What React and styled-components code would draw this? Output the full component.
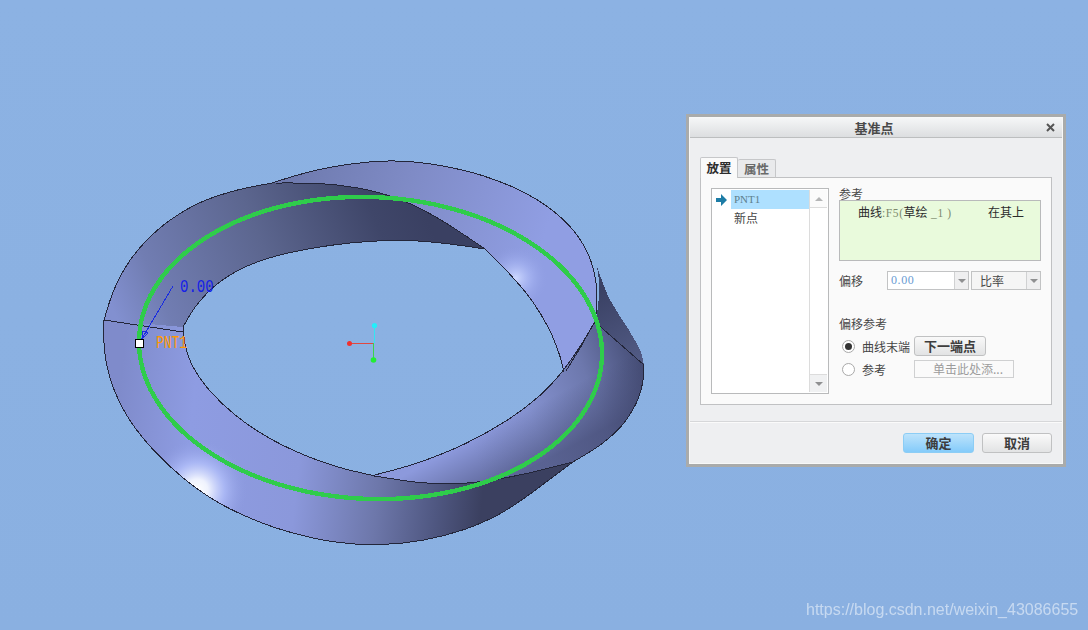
import React from "react";
import styled, { createGlobalStyle } from "styled-components";

const Global = createGlobalStyle`
  html, body { margin: 0; padding: 0; background: #8bb1e2; }
  body { font-family: "Noto Sans CJK SC", "Liberation Sans", sans-serif; }
`;

const Canvas = styled.div`
  position: relative;
  width: 1088px;
  height: 630px;
  overflow: hidden;
  background: linear-gradient(180deg, #8cb2e3 0%, #8ab0e1 100%);
`;
const ModelSvg = styled.svg`
  display: block;
`;
const Watermark = styled.div`
  position: absolute;
  left: 806px;
  top: 600px;
  font: 16px/20px "Liberation Sans", sans-serif;
  color: rgba(236, 242, 250, 0.62);
  filter: blur(0.3px);
  white-space: nowrap;
`;

/* dialog window */
const Dialog = styled.div`
  position: absolute;
  left: 686px;
  top: 114px;
  width: 380px;
  height: 353px;
  box-sizing: border-box;
  border: 3px solid #a9abab;
  box-shadow: inset 0 0 0 1px #f7f8f8;
  padding: 1px;
  background: #eeeff1;
  display: flex;
  flex-direction: column;
  color: #3e3e3e;
  font-size: 12px;
`;
const TitleBar = styled.div`
  position: relative;
  height: 19px;
  flex: none;
  display: flex;
  align-items: center;
  justify-content: center;
  background: linear-gradient(180deg, #f5f6f7, #dcdee0);
  border-bottom: 1px solid #bcbebf;
  font-weight: 700;
  font-size: 13px;
  color: #4a4a4a;
  line-height: 19px;
  padding-right: 4px;
`;
const CloseIcon = styled.svg`
  position: absolute;
  right: 7px;
  top: 5px;
`;
const Main = styled.div`
  flex: 1;
  padding: 19px 10px 16px 10px;
  border-bottom: 1px solid #d6d7d9;
  box-shadow: 0 1px 0 #fafafa;
`;
const Tabs = styled.div`
  display: flex;
  align-items: flex-end;
  height: 21px;
  margin-bottom: -1px;
  position: relative;
`;
const Tab = styled.div`
  box-sizing: border-box;
  height: ${(p) => (p.$active ? 21 : 19)}px;
  width: 38px;
  border: 1px solid #c6c7c9;
  border-bottom: ${(p) => (p.$active ? "none" : "1px solid #c0c0c0")};
  border-left: ${(p) => (p.$active ? "1px solid #c6c7c9" : "none")};
  border-radius: 2px 2px 0 0;
  background: ${(p) => (p.$active ? "#fafafa" : "#e9eaec")};
  color: ${(p) => (p.$active ? "#2d2d2d" : "#6a6a6a")};
  font-weight: 700;
  font-size: 12.5px;
  line-height: ${(p) => (p.$active ? 20 : 18)}px;
  text-align: center;
  z-index: ${(p) => (p.$active ? 1 : 0)};
`;
const Panel = styled.div`
  box-sizing: border-box;
  height: 228px;
  width: 352px;
  border: 1px solid #c0c1c3;
  background: #fafafa;
  padding: 10px 10px 0;
  display: flex;
  gap: 10px;
`;
const ListBox = styled.div`
  box-sizing: border-box;
  width: 118px;
  height: 206px;
  border: 1px solid #b9babb;
  background: #fff;
  padding: 1px;
  display: flex;
`;
const ListItems = styled.div`
  flex: 1;
  display: flex;
  flex-direction: column;
`;
const ListRow = styled.div`
  height: 19px;
  display: flex;
  align-items: center;
`;
const ArrowCell = styled.div`
  width: 18px;
  height: 19px;
  padding-left: 3px;
  box-sizing: border-box;
  display: flex;
  align-items: center;
`;
const RowLabel = styled.div`
  flex: 1;
  height: 19px;
  padding-left: 3px;
  line-height: ${(p) => (p.$selected ? 19 : 18)}px;
  background: ${(p) => (p.$selected ? "#aee0ff" : "transparent")};
  color: ${(p) => (p.$selected ? "#5d7f8c" : "#454545")};
  font-family: ${(p) => (p.$selected ? '"Liberation Serif", serif' : "inherit")};
  font-size: ${(p) => (p.$selected ? "11px" : "12px")};
`;
const ScrollBar = styled.div`
  width: 18px;
  border-left: 1px solid #dcdcdc;
  display: flex;
  flex-direction: column;
  justify-content: space-between;
  box-sizing: border-box;
`;
const ScrollButton = styled.div`
  height: 17px;
  background: ${(p) => (p.$down ? "#f0f1f2" : "#fbfbfb")};
  border: solid #dcdcdc;
  border-width: ${(p) => (p.$down ? "1px 0 0" : "0 0 1px")};
  display: flex;
  align-items: center;
  justify-content: center;
`;
const Tri = styled.span`
  width: 0;
  height: 0;
  border-left: 4px solid transparent;
  border-right: 4px solid transparent;
  ${(p) => (p.$up ? "border-bottom: 4px solid #b4b5b6;" : "border-top: 4px solid #8f9091;")}
`;
const Form = styled.div`
  flex: 1;
  display: flex;
  flex-direction: column;
  align-items: flex-start;
`;
const FieldLabel = styled.div`
  height: ${(p) => p.$h || 12}px;
  line-height: ${(p) => p.$h || 12}px;
  margin-top: ${(p) => p.$mt || 0}px;
  color: #484848;
`;
const RefBox = styled.div`
  box-sizing: border-box;
  width: 202px;
  height: 61px;
  border: 1px solid #b9babb;
  background: #e9fadc;
  padding: 2px 0 0 18px;
  display: flex;
  line-height: 17px;
  color: #2c2c2c;
`;
const RefName = styled.div`
  width: 130px;
  white-space: nowrap;
`;
const Latin = styled.span`
  font-family: "Liberation Serif", serif;
  font-size: 11.5px;
  letter-spacing: 0.6px;
  color: #7d8a6e;
`;
const OffsetRow = styled.div`
  display: flex;
  align-items: center;
  height: 19px;
  margin-top: 10px;
`;
const OffsetLabel = styled.div`
  width: 48px;
  color: #484848;
`;
const Combo = styled.div`
  box-sizing: border-box;
  display: flex;
  width: ${(p) => p.$w}px;
  height: 19px;
  margin-right: ${(p) => p.$mr || 0}px;
  border: 1px solid #c2c3c4;
  background: ${(p) => (p.$value ? "#fff" : "#f5f5f5")};
`;
const ComboText = styled.div`
  flex: 1;
  padding-left: ${(p) => (p.$value ? 3 : 8)}px;
  line-height: 17px;
  color: ${(p) => (p.$value ? "#6a9bd3" : "#474747")};
  font-family: ${(p) => (p.$value ? '"Liberation Serif", serif' : "inherit")};
  letter-spacing: ${(p) => (p.$value ? "0.6px" : "0")};
  border-right: 1px solid #d0d1d2;
`;
const ComboArrow = styled.div`
  width: 13px;
  display: flex;
  align-items: center;
  justify-content: center;
  background: #efeff0;
`;
const RadioRow = styled.div`
  display: flex;
  align-items: center;
  height: ${(p) => p.$h}px;
  margin-top: ${(p) => p.$mt}px;
  padding-left: 3px;
`;
const Radio = styled.span`
  box-sizing: border-box;
  width: 13px;
  height: 13px;
  border-radius: 50%;
  border: 1px solid #a9a9a9;
  background: #fff;
  margin-right: 7px;
  display: flex;
  align-items: center;
  justify-content: center;
  &::after {
    content: "";
    width: 7px;
    height: 7px;
    border-radius: 50%;
    background: ${(p) => (p.$on ? "#333" : "transparent")};
  }
`;
const RadioLabel = styled.div`
  width: 52px;
  color: #444;
  white-space: nowrap;
`;
const NextButton = styled.div`
  box-sizing: border-box;
  width: 72px;
  height: 20px;
  border: 1px solid #c0c1c2;
  border-radius: 3px;
  background: linear-gradient(180deg, #f9f9f9, #e2e3e4);
  text-align: center;
  line-height: 18px;
  font-size: 13px;
  font-weight: 700;
  color: #3d3d3d;
`;
const PickField = styled.div`
  box-sizing: border-box;
  width: 100px;
  height: 18px;
  border: 1px solid #cfd0d1;
  background: #fafafa;
  padding-left: 18px;
  line-height: 16px;
  color: #9c9c9c;
  white-space: nowrap;
`;
const Footer = styled.div`
  flex: none;
  height: 41px;
  box-sizing: border-box;
  padding: 11px 10px 0 0;
  display: flex;
  justify-content: flex-end;
  gap: 8px;
`;
const DialogButton = styled.div`
  box-sizing: border-box;
  width: ${(p) => (p.$primary ? 71 : 70)}px;
  height: 20px;
  border: 1px solid ${(p) => (p.$primary ? "#8ccdf5" : "#c0c1c2")};
  border-radius: 3px;
  background: ${(p) =>
    p.$primary
      ? "linear-gradient(180deg, #bde3fb, #84cbfa)"
      : "linear-gradient(180deg, #fafafa, #e2e3e4)"};
  text-align: center;
  line-height: 18px;
  font-size: 13px;
  font-weight: 700;
  color: #3d3d3d;
`;
const DimText = styled.text`
  font-family: "Liberation Mono", monospace;
  font-size: 18px;
`;

/* geometry helpers for the drawn strip */
const relax = (pts, n = 3) => {
  let cur = pts;
  for (let k = 0; k < n; k++) {
    cur = cur.map((p, i) =>
      i === 0 || i === cur.length - 1
        ? p
        : [
            0.5 * p[0] + 0.25 * (cur[i - 1][0] + cur[i + 1][0]),
            0.5 * p[1] + 0.25 * (cur[i - 1][1] + cur[i + 1][1]),
          ]
    );
  }
  return cur;
};
const curve = (pts) => {
  let d = "";
  for (let i = 0; i < pts.length - 1; i++) {
    const p0 = pts[i - 1] || pts[i];
    const p1 = pts[i];
    const p2 = pts[i + 1];
    const p3 = pts[i + 2] || p2;
    const c1 = [p1[0] + (p2[0] - p0[0]) / 6, p1[1] + (p2[1] - p0[1]) / 6];
    const c2 = [p2[0] - (p3[0] - p1[0]) / 6, p2[1] - (p3[1] - p1[1]) / 6];
    d += `C${c1[0].toFixed(1)} ${c1[1].toFixed(1)} ${c2[0].toFixed(1)} ${c2[1].toFixed(1)} ${p2[0].toFixed(1)} ${p2[1].toFixed(1)}`;
  }
  return d;
};
const rev = (a) => [...a].reverse();
const open = (pts) => `M${pts[0][0]} ${pts[0][1]}` + curve(pts);
const shape = (...segs) =>
  `M${segs[0][0][0]} ${segs[0][0][1]}` +
  segs.map((s, i) => (i ? `L${s[0][0]} ${s[0][1]}` : "") + curve(s)).join("") +
  "Z";

const leftOuter = relax([[104,320],[109,299],[117,279],[129,259],[142,242],[169,216],[202,197],[233,189],[272,183]], 2);
const topOuter = relax([[272,183],[298,174],[323,167],[357,162],[390,160],[403,160],[440,163],[483,173],[523,187],[557,209],[580,232],[593,256],[599,283],[598,307],[595,322]], 2);
const darkEdge = relax([[272,183],[323,182],[357,187],[390,195],[410,203],[440,218],[467,237],[485,249]], 1);
const holeTop = relax([[183,327],[190,307],[213,282],[240,265],[270,256],[307,247],[357,241],[390,239],[420,240],[450,243],[485,249]], 2);
const holeRight = relax([[485,249],[510,273],[533,300],[550,327],[562,360],[564,372]], 1);
const bottomOuter = relax([[104,320],[102,343],[104,360],[112,394],[126,421],[149,449],[186,484],[212,503],[256,524],[296,536],[343,546],[373,548],[427,543],[467,533],[507,513],[523,500],[547,480],[573,462]], 2);
const innerBottom = relax([[183,327],[184,350],[187,360],[203,390],[233,418],[267,440],[303,457],[343,470],[370,477],[420,484],[450,486],[477,484],[527,476],[573,462]], 2);
const midTop = relax([[371,476],[417,465],[467,445],[513,418],[540,397],[563,373],[580,347],[595,322]], 1);
const midInner = rev(innerBottom).slice(0, 6).concat([[371,476]]);
const rightOuter = relax([[644,365],[644,383],[638,403],[623,427],[603,445],[573,462]], 1);
const wedgeOuter = [[597,267],[610,300],[627,327],[640,350],[644,365]];

/* the green datum curve is nearly an ellipse, slightly sheared */
const greenLoop = (() => {
  const pts = [];
  for (let i = 0; i <= 180; i++) {
    const t = (i / 180) * Math.PI * 2;
    const x = 370.5 + 231.5 * Math.cos(t);
    const y = 348 + 151 * Math.sin(t) + 0.025 * (x - 370.5);
    pts.push(`${x.toFixed(1)} ${y.toFixed(1)}`);
  }
  return "M" + pts.join("L") + "Z";
})();

const topBand = shape(topOuter, [[595,322],[564,372]], rev(holeRight), rev(darkEdge));
const leftBand = shape(leftOuter, darkEdge, rev(holeTop));
const bottomBand = shape(bottomOuter, rev(innerBottom));
const midBand = shape(midTop, [[595,322],[644,365]], rightOuter, midInner);
const wedge = shape(wedgeOuter, [[644,365],[595,322]], [[595,322],[598,307],[599,283],[597,267]]);

const Line = ({ d, w = 1 }) => <path d={d} fill="none" stroke="#23263a" strokeWidth={w} />;

const StripDrawing = () => (
  <ModelSvg width="1088" height="630" viewBox="0 0 1088 630">
    <defs>
      <linearGradient id="gTop" gradientUnits="userSpaceOnUse" x1="290" y1="170" x2="540" y2="250">
        <stop offset="0" stopColor="#6e7aae" />
        <stop offset="0.45" stopColor="#7f8bc6" />
        <stop offset="1" stopColor="#909ee3" />
      </linearGradient>
      <linearGradient id="gLeft" gradientUnits="userSpaceOnUse" x1="130" y1="350" x2="430" y2="225">
        <stop offset="0" stopColor="#8290d0" />
        <stop offset="0.15" stopColor="#717db2" />
        <stop offset="0.5" stopColor="#5c668f" />
        <stop offset="0.85" stopColor="#3f4669" />
        <stop offset="1" stopColor="#3a4062" />
      </linearGradient>
      <linearGradient id="gBottom" gradientUnits="userSpaceOnUse" x1="110" y1="480" x2="480" y2="520">
        <stop offset="0" stopColor="#7f8bcb" />
        <stop offset="0.2" stopColor="#8e9ce2" />
        <stop offset="0.5" stopColor="#8b98db" />
        <stop offset="0.72" stopColor="#6d77aa" />
        <stop offset="0.88" stopColor="#4f5781" />
        <stop offset="1" stopColor="#3b4060" />
      </linearGradient>
      <linearGradient id="gMid" gradientUnits="userSpaceOnUse" x1="470" y1="440" x2="645" y2="375">
        <stop offset="0" stopColor="#8c99dc" />
        <stop offset="0.35" stopColor="#8491cf" />
        <stop offset="0.7" stopColor="#6d78ad" />
        <stop offset="1" stopColor="#474f78" />
      </linearGradient>
      <linearGradient id="gMidShade" gradientUnits="userSpaceOnUse" x1="480" y1="435" x2="505" y2="482">
        <stop offset="0" stopColor="#3c4268" stopOpacity="0" />
        <stop offset="1" stopColor="#3c4268" stopOpacity="0.6" />
      </linearGradient>
      <linearGradient id="gWedge" gradientUnits="userSpaceOnUse" x1="600" y1="290" x2="640" y2="365">
        <stop offset="0" stopColor="#3a4164" />
        <stop offset="1" stopColor="#535c86" />
      </linearGradient>
      <radialGradient id="gShineA" gradientUnits="userSpaceOnUse" cx="197" cy="490" r="50">
        <stop offset="0" stopColor="#ffffff" />
        <stop offset="0.22" stopColor="#f4f7ff" stopOpacity="0.95" />
        <stop offset="0.55" stopColor="#b9c6ff" stopOpacity="0.65" />
        <stop offset="1" stopColor="#909ee3" stopOpacity="0" />
      </radialGradient>
      <radialGradient id="gShineB" gradientUnits="userSpaceOnUse" cx="516" cy="278" r="32">
        <stop offset="0" stopColor="#cdd8ff" />
        <stop offset="0.5" stopColor="#aab8f5" stopOpacity="0.55" />
        <stop offset="1" stopColor="#909ee3" stopOpacity="0" />
      </radialGradient>
    </defs>

    <g shapeRendering="crispEdges">
      <path d={topBand} fill="url(#gTop)" />
      <path d={topBand} fill="url(#gShineB)" />
      <path d={leftBand} fill="url(#gLeft)" />
      <path d={bottomBand} fill="url(#gBottom)" />
      <path d={bottomBand} fill="url(#gShineA)" />
      <path d={wedge} fill="url(#gWedge)" />
      <path d={midBand} fill="url(#gMid)" />
      <path d={midBand} fill="url(#gMidShade)" />

      <Line d={open(leftOuter)} />
      <Line d={open(topOuter)} />
      <Line d={open(darkEdge)} />
      <Line d={open(holeTop)} />
      <Line d={open(holeRight)} />
      <Line d={open(bottomOuter)} />
      <Line d={open(innerBottom.slice(0, 9))} />
      <Line d={open(midInner)} />
      <Line d={open(midTop)} />
      <Line d={open(rightOuter)} />
      <Line d="M566 371L582 345L592 326" />
      <Line d="M595 322L644 365" />
      <Line d="M104 320L183 332" />

      <path d={greenLoop} fill="none" stroke="#2fcc4b" strokeWidth="4.4" />

      <line x1="349" y1="343" x2="373" y2="343" stroke="#e0483f" />
      <line x1="373.5" y1="343" x2="373.5" y2="360" stroke="#3bd44a" />
      <line x1="374.5" y1="325" x2="374.5" y2="343" stroke="#33e6f2" strokeWidth="1.5" />
    </g>
    <circle cx="349.5" cy="343.5" r="2.5" fill="#f0312f" />
    <circle cx="374.5" cy="325.5" r="2.6" fill="#22eefa" />
    <circle cx="373.5" cy="360" r="2.8" fill="#22ee33" />

    <g shapeRendering="crispEdges">
      <line x1="173" y1="286" x2="140" y2="342" stroke="#1a2de0" />
      <path d="M142 339L143 331L148 333Z" fill="none" stroke="#1a2de0" />
      <rect x="135.5" y="339.5" width="8" height="8" fill="#fff" stroke="#000" />
    </g>
    <DimText transform="translate(180 292) scale(0.78 1)" fill="#1420e8">0.00</DimText>
    <DimText transform="translate(156 348) scale(0.72 1)" fill="#ff9800">PNT1</DimText>
  </ModelSvg>
);

const Dropdown = () => (
  <ComboArrow>
    <Tri />
  </ComboArrow>
);

export default function App() {
  return (
    <>
      <Global />
      <Canvas>
        <StripDrawing />
        <Dialog>
          <TitleBar>
            基准点
            <CloseIcon width="9" height="9" viewBox="0 0 9 9">
              <path d="M1 1L8 8M8 1L1 8" stroke="#555" strokeWidth="2" />
            </CloseIcon>
          </TitleBar>
          <Main>
            <Tabs>
              <Tab $active>放置</Tab>
              <Tab>属性</Tab>
            </Tabs>
            <Panel>
              <ListBox>
                <ListItems>
                  <ListRow>
                    <ArrowCell>
                      <svg width="11" height="12" viewBox="0 0 11 12">
                        <path d="M0 4H5V0L11 6L5 12V8H0Z" fill="#1d7ca6" />
                      </svg>
                    </ArrowCell>
                    <RowLabel $selected>PNT1</RowLabel>
                  </ListRow>
                  <ListRow>
                    <ArrowCell />
                    <RowLabel>新点</RowLabel>
                  </ListRow>
                </ListItems>
                <ScrollBar>
                  <ScrollButton>
                    <Tri $up />
                  </ScrollButton>
                  <ScrollButton $down>
                    <Tri />
                  </ScrollButton>
                </ScrollBar>
              </ListBox>
              <Form>
                <FieldLabel>参考</FieldLabel>
                <RefBox>
                  <RefName>
                    曲线<Latin>:F5(</Latin>草绘<Latin> _1 )</Latin>
                  </RefName>
                  <div>在其上</div>
                </RefBox>
                <OffsetRow>
                  <OffsetLabel>偏移</OffsetLabel>
                  <Combo $value $w={82} $mr={2}>
                    <ComboText $value>0.00</ComboText>
                    <Dropdown />
                  </Combo>
                  <Combo $w={70}>
                    <ComboText>比率</ComboText>
                    <Dropdown />
                  </Combo>
                </OffsetRow>
                <FieldLabel $h={14} $mt={27}>偏移参考</FieldLabel>
                <RadioRow $h={20} $mt={5}>
                  <Radio $on />
                  <RadioLabel>曲线末端</RadioLabel>
                  <NextButton>下一端点</NextButton>
                </RadioRow>
                <RadioRow $h={18} $mt={4}>
                  <Radio />
                  <RadioLabel>参考</RadioLabel>
                  <PickField>单击此处添...</PickField>
                </RadioRow>
              </Form>
            </Panel>
          </Main>
          <Footer>
            <DialogButton $primary>确定</DialogButton>
            <DialogButton>取消</DialogButton>
          </Footer>
        </Dialog>
        <Watermark>https://blog.csdn.net/weixin_43086655</Watermark>
      </Canvas>
    </>
  );
}
